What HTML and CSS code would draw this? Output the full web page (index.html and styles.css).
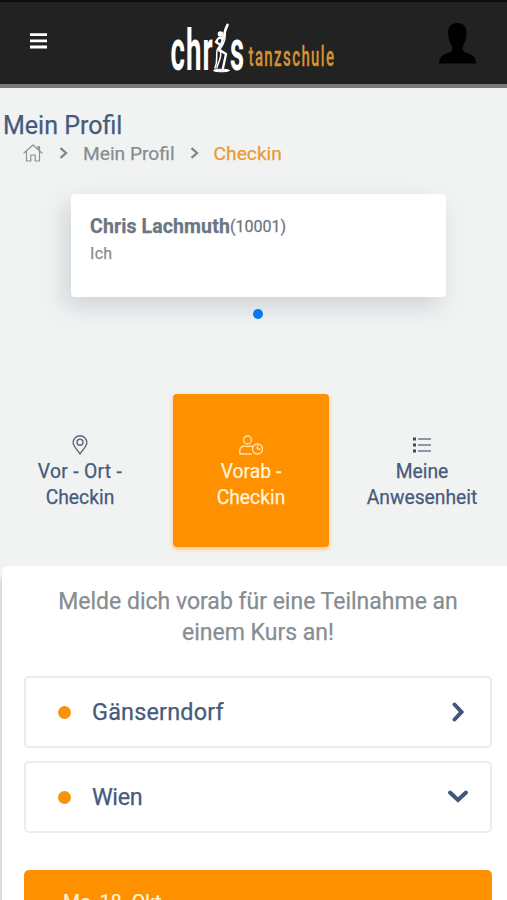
FILE: index.html
```html
<!DOCTYPE html>
<html lang="de">
<head>
<meta charset="utf-8">
<title>Checkin</title>
<link rel="stylesheet" href="styles.css">
</head>
<body>
<header class="topbar">
  <svg class="menu" width="17" height="16" viewBox="0 0 17 16"><path d="M0 1.6h17M0 7.8h17M0 14h17" stroke="#fff" stroke-width="2.8"/></svg>
  <svg class="logo" width="170" height="66" viewBox="0 0 170 66">
    <text class="brand" x="1.500" y="49.500" textLength="43" lengthAdjust="spacingAndGlyphs">chr</text>
    <text class="brand" x="61" y="49.500" textLength="15" lengthAdjust="spacingAndGlyphs">s</text>
    <text class="sub" x="79.500" y="45.500" textLength="87" lengthAdjust="spacingAndGlyphs">tanzschule</text>
    <g fill="none" stroke="#fff" stroke-linecap="round" stroke-linejoin="round">
      <ellipse cx="52.500" cy="50.500" rx="8" ry="1.300" fill="#fff" stroke-width="1"/>
      <path d="M58.500 5c-2 4-3 6-3 10l-2.500 4" stroke-width="2.700"/>
      <path d="M53 18c-4-1-4 1-6 4l3 2M54 19c-1 5-3 7-5 10l8 5-3 14" stroke-width="2.300"/>
      <path d="M56 15c1 7-4 12-6 16M48 30c-1 7 1 10-2 18M51 30c3 8-3 13-3 18" stroke-width="1.500"/>
    </g>
    <circle cx="51.500" cy="14" r="2.800" fill="#fff"/>
  </svg>
  <svg class="avatar" width="37" height="42" viewBox="0 0 37 42"><path d="M18.500 1C11 1 8 6 9.500 14c.5 7 3.500 8 4 13-1 4-6 4-9 6-3 1.500-4 4-4.500 8.500h37c-.5-4.500-1.500-7-4.500-8.500-3-2-8-2-9-6 .5-5 3-6 3.700-13C28.500 6 25.500 1 18.500 1z" fill="#000"/></svg>
</header>
<main>
  <h1 class="title"><span>Mein Profil</span></h1>
  <nav class="crumbs">
    <svg width="20" height="18" viewBox="0 0 20 18" fill="none" stroke="#8b9196" stroke-width="1.200" stroke-linejoin="round" stroke-linecap="round"><path d="M1 9l9-8 9 8M3.500 7v10h4.300v-6h4.400v6h4.300V7M15 5V2.500h1.500v4"/></svg>
    <svg class="sep" width="9" height="12" viewBox="0 0 9 12"><path d="M1.500 1.200L7 6l-5.500 4.800" fill="none" stroke="#80868a" stroke-width="2.300"/></svg>
    <span class="crumb">Mein Profil</span>
    <svg class="sep2" width="9" height="12" viewBox="0 0 9 12"><path d="M1.500 1.200L7 6l-5.500 4.800" fill="none" stroke="#80868a" stroke-width="2.300"/></svg>
    <span class="crumb current">Checkin</span>
  </nav>
  <section class="person">
    <div class="who"><b>Chris Lachmuth</b><span>(10001)</span></div>
    <div class="rel">Ich</div>
  </section>
  <div class="pager"></div>
  <div class="tabs">
    <div class="tab">
      <svg width="24" height="20" viewBox="0 0 24 20" fill="none" stroke="#5b6780" stroke-width="1.400"><path d="M12 18.800C9.500 15 5.200 11.500 5.200 7.500a6.800 6.800 0 0 1 13.600 0c0 4-4.300 7.500-6.800 11.300z"/><circle cx="12" cy="7.300" r="3"/></svg>
      <span class="ort">Vor - Ort -</span><span>Checkin</span>
    </div>
    <div class="tab active">
      <svg width="24" height="20" viewBox="0 0 24 20" fill="none" stroke="#ffe2b0" stroke-width="1.300" stroke-linecap="round"><circle cx="8.500" cy="5" r="4"/><path d="M12.500 19H1c-1-5 1-8 4.500-8 2 .7 4 .7 6 0q1.200.1 2 .8"/><circle cx="18.500" cy="14" r="5"/><path d="M18.500 11v3h2.500"/></svg>
      <span>Vorab -</span><span>Checkin</span>
    </div>
    <div class="tab">
      <svg width="20" height="20" viewBox="0 0 20 20"><path d="M1 4h3M1 10h3M1 16h3" stroke="#3d4964" stroke-width="3"/><path d="M6 4h13M6 10h13M6 16h13" stroke="#6d7890" stroke-width="1.300"/></svg>
      <span>Meine</span><span>Anwesenheit</span>
    </div>
  </div>
  <section class="panel">
    <p class="intro">Melde dich vorab für eine Teilnahme an<br>einem Kurs an!</p>
    <div class="place"><i></i><span class="p1">Gänserndorf</span>
      <svg width="22" height="22" viewBox="0 0 22 22"><path d="M7.500 3.500l7 7.500-7 7.500" fill="none" stroke="#40577c" stroke-width="4" stroke-linecap="round"/></svg></div>
    <div class="place"><i></i><span class="p2">Wien</span>
      <svg width="22" height="22" viewBox="0 0 22 22"><path d="M3 6.500l8 7.500 8-7.500" fill="none" stroke="#40577c" stroke-width="4" stroke-linecap="round"/></svg></div>
    <div class="day">Mo, 18. Okt</div>
  </section>
</main>
</body>
</html>
```
FILE: styles.css
```css
* { box-sizing: border-box; }
body { margin: 0; height: 900px; overflow: hidden; background: #f1f3f3; font-family: Roboto, "Liberation Sans", sans-serif; color: #465a7b; }
main { -webkit-text-stroke: 0.25px currentColor; }
.topbar { height: 88px; background: #222; border-top: 2px solid #0e0e10; border-bottom: 4px solid #7c7979; display: flex; align-items: flex-start; }
.menu { margin: 31px 0 0 30px; }
.logo { margin: 18px 0 0 122px; }
.brand { font-size: 58px; font-weight: 700; fill: #fff; letter-spacing: 2px; }
.sub { font-size: 27px; font-weight: 500; fill: #d8922f; stroke: #d8922f; stroke-width: .3px; letter-spacing: 2.500px; }
.avatar { margin: 20px 0 0 100px; }
.title { margin: 23px 0 0 3px; height: 30px; line-height: 30px; font-size: 25px; font-weight: 400; }
.crumbs { display: flex; align-items: center; height: 26px; margin-left: 23px; position: relative; top: -1px; }
.sep { margin-left: 16px; }
.sep2 { margin-left: 15px; }
.crumb { font-size: 19.200px; color: #868d92; margin-left: 15px; white-space: nowrap; }
.current { color: #ea9a32; }
.person { width: 375px; height: 103px; margin: 27px 0 0 71px; padding: 20px 19px; background: #fff; border-radius: 4px; box-shadow: -6px 10px 24px rgba(70,85,105,.2); }
.who { height: 26px; line-height: 26px; display: flex; color: #6c7580; white-space: nowrap; }
.who b { font-size: 19.500px; letter-spacing: .12px; }
.who span { font-size: 16px; }
.rel { font-size: 16px; line-height: 28px; color: #868d92; letter-spacing: .3px; }
.pager { width: 10px; height: 10px; border-radius: 50%; background: #0878f4; margin: 12px 0 0 253px; }
.tabs { display: grid; grid-template-columns: 156px 156px 156px; column-gap: 15px; margin: 75px 0 0 2px; height: 153px; }
.tab { border-radius: 4px; padding-top: 41px; display: flex; flex-direction: column; align-items: center; font-size: 19.300px; line-height: 26px; }
.tab svg { margin-bottom: 4px; flex: none; }
.ort { letter-spacing: .3px; }
.active { background: #ff9000; color: #fff3d9; box-shadow: 0 2px 4px rgba(255,144,0,.5); }
.panel { margin: 19px 0 0 2px; background: #fff; border-radius: 6px 0 0 0; padding: 20px 15px 0 22px; height: 340px; box-shadow: -2px 10px 3px rgba(0,0,0,.12); }
.intro { margin: 0; text-align: center; font-size: 23px; line-height: 31.200px; color: #868d92; white-space: nowrap; height: 90px; }
.place { height: 72px; border: 2px solid #ecedee; border-radius: 5px; margin-bottom: 13px; display: flex; align-items: center; padding: 0 21px 0 32px; font-size: 23.400px; }
.place i { width: 13px; height: 13px; border-radius: 50%; background: #f9920e; margin-right: 21px; }
.place svg { margin-left: auto; }
.p1 { letter-spacing: .2px; }
.p2 { letter-spacing: -.4px; }
.day { margin-top: 37px; height: 60px; border-radius: 5px 5px 0 0; background: #ff9000; color: #fff3d9; font-size: 19.500px; line-height: 26px; padding: 20px 39px; }
```
